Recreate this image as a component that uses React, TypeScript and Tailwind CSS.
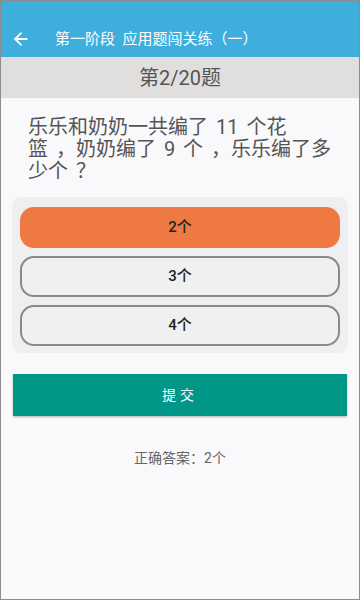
import { ArrowLeft } from 'lucide-react';

const options = ['2个', '3个', '4个'];

const questionLines = ['乐乐和奶奶一共编了 11 个花', '篮 ，奶奶编了 9 个 ，乐乐编了多', '少个 ？'];

export default function App() {
  const selected = 0;

  return (
    <div
      lang="zh-CN"
      className="w-[360px] h-[600px] flex flex-col bg-[#f9f8fb] border border-[#8c8c8c] overflow-hidden"
      style={{ fontFamily: 'Roboto, "Noto Sans CJK SC", sans-serif' }}
    >
      {/* header */}
      <div className="h-[56px] shrink-0 bg-[#3eaedd] flex items-end pb-[8px]">
        <div className="flex items-center h-[20px] w-full">
          <div className="w-[54px] pl-[10px] flex items-center">
            <ArrowLeft size={20} strokeWidth={2.2} className="text-white" />
          </div>
          <span className="text-white text-[15px] leading-[20px]">第一阶段&nbsp;&nbsp;应用题闯关练（一）</span>
        </div>
      </div>

      {/* progress */}
      <div className="h-[41px] shrink-0 bg-[#e0dfde] flex items-center justify-center">
        <span className="text-[20px] text-[#555] leading-none">第2/20题</span>
      </div>

      {/* question */}
      <div className="pt-[18px] pl-[27px] pr-[20px] text-[20px] leading-[22px] text-[#555] [word-spacing:3px]">
        {questionLines.map((line) => (
          <div key={line} className="whitespace-pre">
            {line}
          </div>
        ))}
      </div>

      {/* options */}
      <div className="mx-[11px] mt-[15px] bg-[#efeef0] rounded-[9px] px-[8px] pt-[10px] pb-[7px] flex flex-col gap-[8px]">
        {options.map((opt, i) => (
          <button
            key={opt}
            type="button"
            className={
              i === selected
                ? 'h-[41px] rounded-[14px] bg-[#ef7943] text-[15px] font-medium text-[#222]'
                : 'h-[41px] rounded-[14px] border-2 border-[#8a8a8a] bg-[#f0eff1] text-[15px] font-medium text-[#222]'
            }
          >
            {opt}
          </button>
        ))}
      </div>

      {/* submit */}
      <button
        type="button"
        className="mx-[12px] mt-[21px] h-[42px] bg-[#009688] text-white text-[14px] tracking-[4px] shadow-[0_1px_2px_rgba(0,0,0,0.3)]"
      >
        提交
      </button>

      <div className="mt-[32px] text-center text-[14px] text-[#666]">正确答案：2个</div>
    </div>
  );
}
